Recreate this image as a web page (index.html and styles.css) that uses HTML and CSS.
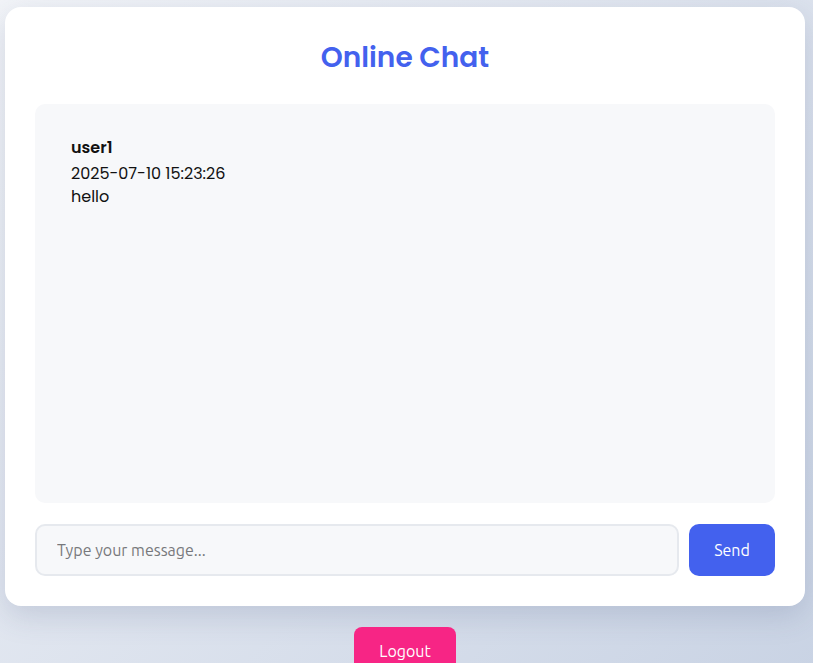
FILE: index.html
```html
<!DOCTYPE html>
<html>
<head>
<meta charset="utf-8">
<title>Online Chat</title>
<link rel="stylesheet" href="styles.css">
</head>
<body>
<div class="page">
  <div class="card">
    <h1 class="title">Online Chat</h1>
    <div class="chat-box">
      <div class="message">
        <div class="msg-user">user1</div>
        <div class="msg-time">2025-07-10 15:23:26</div>
        <div class="msg-text">hello</div>
      </div>
    </div>
    <form class="composer">
      <input class="msg-input" type="text" placeholder="Type your message...">
      <button class="send-btn" type="button">Send</button>
    </form>
  </div>
  <div class="logout-row">
    <button class="logout-btn" type="button">Logout</button>
  </div>
</div>
</body>
</html>
```
FILE: styles.css
```css
html, body {
  margin: 0;
  padding: 0;
}
body {
  min-height: 100vh;
  background: linear-gradient(135deg, #f2f4f8 0%, #c9d3e4 100%);
  font-family: "Poppins", "Lato", "Open Sans", sans-serif;
  overflow: hidden;
}
.page {
  padding: 7px 8px 0 5px;
}
.card {
  width: 800px;
  box-sizing: border-box;
  background: #fff;
  border-radius: 16px;
  padding: 30px;
  box-shadow: 0 10px 30px rgba(60, 80, 120, 0.18);
}
.title {
  margin: 0 0 25px;
  text-align: center;
  color: #4361ee;
  font-size: 28px;
  line-height: 42px;
  font-weight: 600;
}
.chat-box {
  height: 399px;
  box-sizing: border-box;
  background: #f7f8fa;
  border-radius: 10px;
  padding: 33px 36px;
}
.message {
  color: #111;
  font-size: 16px;
  line-height: 22px;
}
.msg-user {
  font-weight: 600;
  margin-bottom: 4px;
}
.msg-time {
  margin-bottom: 1px;
}
.composer {
  margin: 21px 0 0;
  display: flex;
  gap: 10px;
}
.msg-input {
  flex: 1;
  height: 52px;
  box-sizing: border-box;
  border: 2px solid #e6e9ee;
  border-radius: 10px;
  background: #f7f8fa;
  padding: 0 20px;
  font-family: "Ubuntu", "Open Sans", sans-serif;
  font-size: 16px;
  color: #333;
  outline: none;
}
.msg-input::placeholder {
  color: #77787c;
}
.send-btn {
  width: 86px;
  height: 52px;
  border: none;
  border-radius: 10px;
  background: #4361ee;
  color: #fff;
  font-family: "Ubuntu", "Open Sans", sans-serif;
  font-size: 16px;
}
.logout-row {
  width: 800px;
  display: flex;
  justify-content: center;
  margin-top: 21px;
}
.logout-btn {
  width: 102px;
  height: 48px;
  border: none;
  border-radius: 8px;
  background: #f72585;
  color: #fff;
  font-family: "Ubuntu", "Open Sans", sans-serif;
  font-size: 16px;
  padding: 0;
  line-height: 48px;
}
```
